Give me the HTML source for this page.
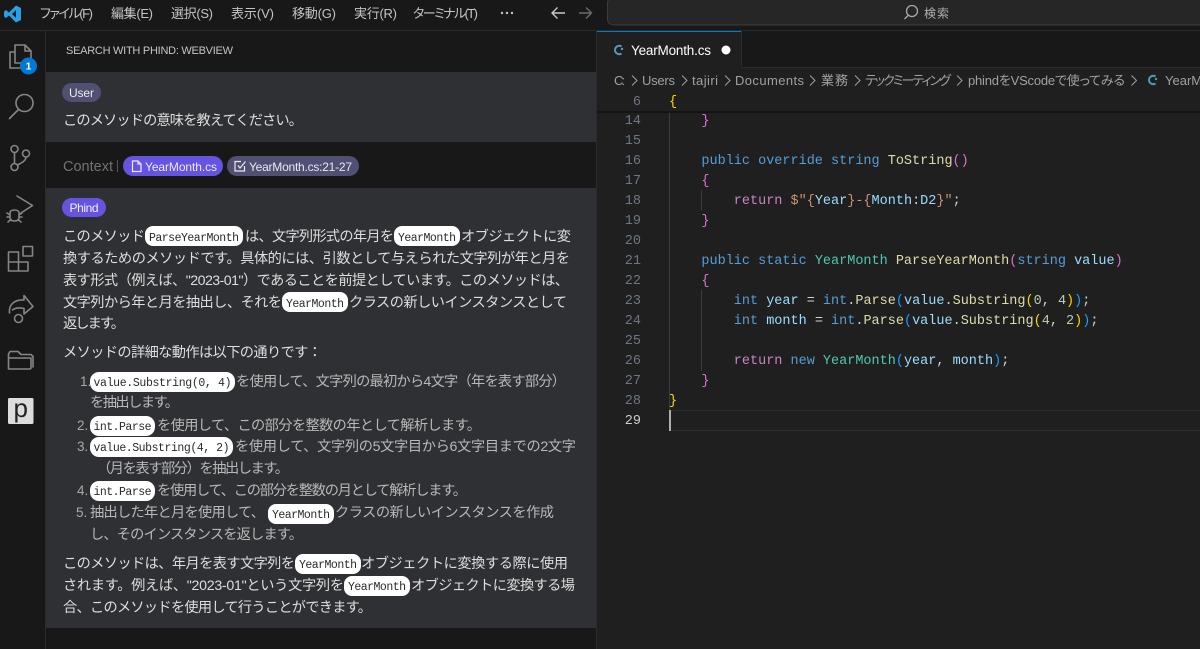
<!DOCTYPE html>
<html lang="ja"><head><meta charset="utf-8"><title>Phind</title>
<style>
html,body{margin:0;padding:0;background:#181818;width:1200px;height:649px;overflow:hidden}
svg{display:block;position:absolute;left:0;top:0}
text{font-family:"Liberation Sans","Noto Sans CJK JP",sans-serif;white-space:pre}
.m{font-size:13px;fill:#c4c4c4;font-feature-settings:"palt" 1}
.b{font-size:14.2px;fill:#dedede}
.l{font-size:14.2px;fill:#b8b8b8}
.n{font-size:13.5px;fill:#a8a8a8}
.cc{font-family:"Liberation Mono",monospace;font-size:11.5px;fill:#2a2a2a}
.c{font-family:"Liberation Mono",monospace;font-size:13.5px;fill:#9cdcfe}
.ln{font-family:"Liberation Mono",monospace;font-size:13.5px;fill:#6e7681;text-anchor:end}
.bc{font-size:13px;fill:#a0a0a0;font-feature-settings:"palt" 1}
.k{fill:#569cd6}.r{fill:#c586c0}.t{fill:#4ec9b0}.f{fill:#dcdcaa}.s{fill:#ce9178}.w{fill:#cccccc}.y{fill:#ffd700}.p{fill:#da70d6}.u{fill:#179fff}.d{fill:#b5cea8}.q{fill:#d4d4d4}
.ic{fill:none;stroke:#858585;stroke-width:1.6;stroke-linejoin:round;stroke-linecap:round}
.chip{fill:#fff}
</style></head><body>
<svg width="1200" height="649" viewBox="0 0 1200 649" xmlns="http://www.w3.org/2000/svg">
<rect width="1200" height="649" fill="#181818"/>
<!-- title bar -->
<rect x="0" y="30" width="1200" height="1" fill="#2b2b2b"/>
<path d="M16 5.5 L21 8 V20 L16 22.5 L9 15.5 L6 18 L4 16.5 V11.5 L6 10 L9 12.5 Z M16 10 L12 14 L16 18 Z" fill="#2b9fe6" fill-rule="evenodd"/>
<text class="m" x="40" y="18" textLength="53">ファイル(F)</text>
<text class="m" x="111" y="18" textLength="42">編集(E)</text>
<text class="m" x="171" y="18" textLength="42">選択(S)</text>
<text class="m" x="231" y="18" textLength="43">表示(V)</text>
<text class="m" x="292" y="18" textLength="44">移動(G)</text>
<text class="m" x="354" y="18" textLength="43">実行(R)</text>
<text class="m" x="413" y="18" textLength="65">ターミナル(T)</text>
<circle cx="502" cy="13" r="1.2" fill="#c4c4c4"/><circle cx="507" cy="13" r="1.2" fill="#c4c4c4"/><circle cx="512" cy="13" r="1.2" fill="#c4c4c4"/>
<path d="M565 13 H552 M557.500 7.500 L552 13 L557.500 18.500" fill="none" stroke="#c8c8c8" stroke-width="1.4"/>
<path d="M579 13 H591 M586 7.500 L591.500 13 L586 18.500" fill="none" stroke="#6a6a6a" stroke-width="1.4"/>
<rect x="607.500" y="-3" width="620" height="28" rx="6" fill="#262626" stroke="#3c3c3c"/>
<circle cx="912" cy="11" r="5.500" fill="none" stroke="#a8a8a8" stroke-width="1.300"/><path d="M908 15.500 L904.500 19" stroke="#a8a8a8" stroke-width="1.300"/>
<text x="924" y="17.500" font-size="12" fill="#b0b0b0" textLength="25">検索</text>

<!-- activity bar -->
<rect x="45" y="31" width="1" height="618" fill="#2b2b2b"/>
<path class="ic" d="M15 52 H10 V68 H23 V63 M15 45 H25 L31 51 V63 H15 Z M25 45 V51 H31"/>
<circle cx="28.500" cy="66" r="8.500" fill="#0078d4"/>
<text x="28.500" y="69.500" font-size="10" font-weight="bold" fill="#fff" text-anchor="middle">1</text>
<circle class="ic" cx="24.500" cy="103" r="8.500"/><path class="ic" d="M18.500 109.500 L9.500 118.500"/>
<circle class="ic" cx="14.500" cy="149" r="3.500"/><circle class="ic" cx="14.500" cy="167" r="3.500"/><circle class="ic" cx="26" cy="153.500" r="3.500"/>
<path class="ic" d="M14.500 152.500 V163.500 M26 157 C26 161 21 163 17.500 165"/>
<path class="ic" d="M17 196 L32.500 205.500 L21 213"/>
<path class="ic" d="M10 213 C10 209 19 209 19 213 V218 C19 222 10 222 10 218 Z M7 213 L10 215 M22 213 L19 215 M7 217 H10 M22 217 H19 M8 222 L11 219.500 M21 222 L18 219.500"/>
<path class="ic" d="M8.500 252 H18.500 V262 H28 V271 H8.500 Z M8.500 262 H18.500 V271"/>
<rect class="ic" x="23" y="246.500" width="9.500" height="9.500"/>
<path class="ic" d="M9.500 313 C8.500 304 15 299.500 24 300 V295.500 L33 306.500 L24 314 V308.500 C19 307.500 15 308 12.500 310"/>
<circle class="ic" cx="18.500" cy="318.500" r="4"/>
<path class="ic" d="M8.500 369 V354 L10 351.500 H18 L21 354.500 H31 L33 356.500 V367 M8.500 369 H29.500 Q31 369 31 367.500 V358 H8.500"/>
<rect x="8" y="398" width="25.500" height="26" rx="1.500" fill="#dcdcdc"/>
<text x="20.700" y="417" font-size="26" fill="#222" text-anchor="middle">p</text>

<!-- sidebar -->
<text x="66" y="54" font-size="11" fill="#c4c4c4" textLength="167">SEARCH WITH PHIND: WEBVIEW</text>
<rect x="46" y="72" width="550" height="70" fill="#2f3033"/>
<rect x="46" y="188" width="550" height="440" fill="#2f3033"/>
<rect x="596" y="31" width="1" height="618" fill="#2b2b2b"/>
<rect x="62" y="83" width="39" height="19" rx="9.500" fill="#514f72"/>
<text x="69" y="97" font-size="12" fill="#ececec" textLength="25">User</text>
<text class="b" x="63" y="125" textLength="240">このメソッドの意味を教えてください。</text>
<text x="63" y="171" font-size="14.500" fill="#727272" textLength="50">Context</text>
<rect x="117" y="160" width="1" height="12" fill="#555"/>
<rect x="123" y="156" width="100" height="20" rx="10" fill="#6653e0"/>
<path d="M132.500 161 H138 L141 164 V171.500 H132.500 Z M138 161 V164 H141" fill="none" stroke="#ebe8ff" stroke-width="1.200"/>
<text x="145" y="171" font-size="12" fill="#ece9ff" textLength="72">YearMonth.cs</text>
<rect x="227" y="156" width="132" height="20" rx="10" fill="#514f72"/>
<path d="M241 161.500 H235 V171 H244.500 V166 M238 165.500 L240 168 L245.500 161.500" fill="none" stroke="#e8e8f0" stroke-width="1.200"/>
<text x="249" y="171" font-size="12" fill="#e8e8f0" textLength="103">YearMonth.cs:21-27</text>
<rect x="62" y="198" width="44" height="19" rx="9.500" fill="#6653e0"/>
<text x="69.500" y="212" font-size="12" fill="#f0eeff" textLength="29">Phind</text>

<!-- answer body -->
<g>
<text class="b" x="63" y="241" textLength="82">このメソッド</text>
<rect class="chip" x="145" y="226" width="98" height="20" rx="8"/><text class="cc" x="149" y="241" textLength="90">ParseYearMonth</text>
<text class="b" x="245" y="241" textLength="149">は、文字列形式の年月を</text>
<rect class="chip" x="394" y="226" width="66" height="20" rx="8"/><text class="cc" x="398" y="241" textLength="58">YearMonth</text>
<text class="b" x="461" y="241" textLength="110">オブジェクトに変</text>

<text class="b" x="63" y="263" textLength="507">換するためのメソッドです。具体的には、引数として与えられた文字列が年と月を</text>
<text class="b" x="63" y="285" textLength="506">表す形式（例えば、"2023-01"）であることを前提としています。このメソッドは、</text>
<text class="b" x="63" y="307" textLength="219">文字列から年と月を抽出し、それを</text>
<rect class="chip" x="282" y="292" width="66" height="20" rx="8"/><text class="cc" x="286" y="307" textLength="58">YearMonth</text>
<text class="b" x="349" y="307" textLength="218">クラスの新しいインスタンスとして</text>
<text class="b" x="63" y="328" textLength="62">返します。</text>
<text class="b" x="63" y="357" textLength="259">メソッドの詳細な動作は以下の通りです：</text>

<text class="n" x="80" y="386">1.</text>
<rect class="chip" x="90" y="372" width="145" height="20" rx="9"/><text class="cc" x="93.500" y="386" textLength="138">value.Substring(0, 4)</text>
<text class="l" x="236" y="386" textLength="330">を使用して、文字列の最初から4文字（年を表す部分）</text>
<text class="l" x="90" y="407" textLength="89">を抽出します。</text>

<text class="n" x="77" y="430">2.</text>
<rect class="chip" x="90" y="416" width="65" height="20" rx="9"/><text class="cc" x="93.500" y="430" textLength="58">int.Parse</text>
<text class="l" x="157" y="430" textLength="324">を使用して、この部分を整数の年として解析します。</text>

<text class="n" x="77" y="451">3.</text>
<rect class="chip" x="90" y="437" width="143" height="20" rx="9"/><text class="cc" x="93.500" y="451" textLength="136">value.Substring(4, 2)</text>
<text class="l" x="235" y="451" textLength="341">を使用して、文字列の5文字目から6文字目までの2文字</text>
<text class="l" x="97" y="473" textLength="192">（月を表す部分）を抽出します。</text>

<text class="n" x="77" y="495">4.</text>
<rect class="chip" x="90" y="481" width="65" height="20" rx="9"/><text class="cc" x="93.500" y="495" textLength="58">int.Parse</text>
<text class="l" x="157" y="495" textLength="310">を使用して、この部分を整数の月として解析します。</text>

<text class="n" x="76" y="517">5.</text>
<text class="l" x="90" y="517" textLength="175">抽出した年と月を使用して、</text>
<rect class="chip" x="268" y="504" width="66" height="20" rx="8"/><text class="cc" x="272" y="518" textLength="58">YearMonth</text>
<text class="l" x="335" y="517" textLength="219">クラスの新しいインスタンスを作成</text>
<text class="l" x="90" y="539" textLength="213">し、そのインスタンスを返します。</text>

<text class="b" x="63" y="568" textLength="232">このメソッドは、年月を表す文字列を</text>
<rect class="chip" x="295" y="554" width="66" height="20" rx="8"/><text class="cc" x="299" y="568" textLength="58">YearMonth</text>
<text class="b" x="361" y="568" textLength="207">オブジェクトに変換する際に使用</text>

<text class="b" x="63" y="590" textLength="281">されます。例えば、"2023-01"という文字列を</text>
<rect class="chip" x="344" y="576" width="66" height="20" rx="8"/><text class="cc" x="348" y="590" textLength="58">YearMonth</text>
<text class="b" x="411" y="590" textLength="164">オブジェクトに変換する場</text>
<text class="b" x="63" y="612" textLength="309">合、このメソッドを使用して行うことができます。</text>
</g>

<!-- editor -->
<rect x="597" y="31" width="603" height="618" fill="#1f1f1f"/>
<rect x="597" y="31" width="603" height="37" fill="#181818"/>
<rect x="597" y="31" width="144" height="37" fill="#1f1f1f"/>
<rect x="597" y="31" width="144" height="1" fill="#0078d4"/>
<rect x="741" y="31" width="1" height="37" fill="#2b2b2b"/>
<rect x="742" y="67" width="458" height="1" fill="#2b2b2b"/>
<path d="M621.500 46.500 A4.200 4.200 0 1 0 621.500 53.500" fill="none" stroke="#519aba" stroke-width="2"/><circle cx="622" cy="49" r="1.200" fill="#519aba"/>
<text x="631" y="55" font-size="13.500" fill="#ffffff" textLength="80">YearMonth.cs</text>
<circle cx="726" cy="50" r="4.500" fill="#ffffff"/>

<text class="bc" x="614" y="85" textLength="11">C:</text>
<path d="M632 75.500 L637 80.500 L632 85.500 M682 75.500 L687 80.500 L682 85.500 M725 75.500 L730 80.500 L725 85.500 M810 75.500 L815 80.500 L810 85.500 M855 75.500 L860 80.500 L855 85.500 M957 75.500 L962 80.500 L957 85.500 M1131.500 75.500 L1136.500 80.500 L1131.500 85.500" fill="none" stroke="#a0a0a0" stroke-width="1"/>
<text class="bc" x="642" y="85" textLength="33">Users</text>
<text class="bc" x="692" y="85" textLength="26">tajiri</text>
<text class="bc" x="735" y="85" textLength="69">Documents</text>
<text class="bc" x="821" y="85" textLength="27">業務</text>
<text class="bc" x="865" y="85" textLength="86">テックミーティング</text>
<text class="bc" x="968" y="85" textLength="157">phindをVScodeで使ってみる</text>
<path d="M1155.500 76.500 A4.200 4.200 0 1 0 1155.500 83.500" fill="none" stroke="#519aba" stroke-width="2"/><circle cx="1156" cy="79" r="1.200" fill="#519aba"/>
<text class="bc" x="1165" y="85">YearMonth.cs</text>

<rect x="669" y="111" width="1" height="300" fill="#3c3c3c"/>
<rect x="701" y="190" width="1" height="20" fill="#3c3c3c"/>
<rect x="701" y="290" width="1" height="81" fill="#3c3c3c"/>
<rect x="670" y="410" width="530" height="1" fill="#2c2c2c"/><rect x="670" y="430" width="530" height="1" fill="#2c2c2c"/>
<rect x="669" y="410" width="2" height="21" fill="#aeafad"/>

<g transform="translate(0,-1)">
<text class="ln" x="641" y="125">14</text><text class="ln" x="641" y="145">15</text><text class="ln" x="641" y="165">16</text><text class="ln" x="641" y="185">17</text><text class="ln" x="641" y="205">18</text><text class="ln" x="641" y="225">19</text><text class="ln" x="641" y="245">20</text><text class="ln" x="641" y="265">21</text><text class="ln" x="641" y="285">22</text><text class="ln" x="641" y="305">23</text><text class="ln" x="641" y="325">24</text><text class="ln" x="641" y="345">25</text><text class="ln" x="641" y="365">26</text><text class="ln" x="641" y="385">27</text><text class="ln" x="641" y="405">28</text><text class="ln" x="641" y="425" style="fill:#cccccc">29</text>

<text class="c" x="701.400" y="125"><tspan class="p">}</tspan></text>
<text class="c" x="701.400" y="165"><tspan class="k">public override string </tspan><tspan class="f">ToString</tspan><tspan class="p">(</tspan><tspan class="p">)</tspan></text>
<text class="c" x="701.400" y="185"><tspan class="p">{</tspan></text>
<text class="c" x="733.800" y="205"><tspan class="r">return </tspan><tspan class="s">$"{</tspan><tspan>Year</tspan><tspan class="s">}-{</tspan><tspan>Month</tspan><tspan class="q">:</tspan><tspan>D2</tspan><tspan class="s">}"</tspan><tspan class="q">;</tspan></text>
<text class="c" x="701.400" y="225"><tspan class="p">}</tspan></text>
<text class="c" x="701.400" y="265"><tspan class="k">public static </tspan><tspan class="t">YearMonth </tspan><tspan class="f">ParseYearMonth</tspan><tspan class="p">(</tspan><tspan class="k">string </tspan><tspan>value</tspan><tspan class="p">)</tspan></text>
<text class="c" x="701.400" y="285"><tspan class="p">{</tspan></text>
<text class="c" x="733.800" y="305"><tspan class="k">int </tspan><tspan>year </tspan><tspan class="q">= </tspan><tspan class="k">int</tspan><tspan class="q">.</tspan><tspan class="f">Parse</tspan><tspan class="u">(</tspan><tspan>value</tspan><tspan class="q">.</tspan><tspan class="f">Substring</tspan><tspan class="y">(</tspan><tspan class="d">0</tspan><tspan class="q">, </tspan><tspan class="d">4</tspan><tspan class="y">)</tspan><tspan class="u">)</tspan><tspan class="q">;</tspan></text>
<text class="c" x="733.800" y="325"><tspan class="k">int </tspan><tspan>month </tspan><tspan class="q">= </tspan><tspan class="k">int</tspan><tspan class="q">.</tspan><tspan class="f">Parse</tspan><tspan class="u">(</tspan><tspan>value</tspan><tspan class="q">.</tspan><tspan class="f">Substring</tspan><tspan class="y">(</tspan><tspan class="d">4</tspan><tspan class="q">, </tspan><tspan class="d">2</tspan><tspan class="y">)</tspan><tspan class="u">)</tspan><tspan class="q">;</tspan></text>
<text class="c" x="733.800" y="365"><tspan class="r">return </tspan><tspan class="k">new </tspan><tspan class="t">YearMonth</tspan><tspan class="u">(</tspan><tspan>year</tspan><tspan class="q">, </tspan><tspan>month</tspan><tspan class="u">)</tspan><tspan class="q">;</tspan></text>
<text class="c" x="701.400" y="385"><tspan class="p">}</tspan></text>
<text class="c" x="669" y="405"><tspan class="y">}</tspan></text>
</g>

<!-- sticky scroll -->
<rect x="597" y="90" width="603" height="21" fill="#1f1f1f"/>
<rect x="597" y="111" width="603" height="2" fill="#111111" opacity=".75"/>
<text class="ln" x="641" y="105">6</text>
<text class="c" x="669" y="105"><tspan class="y">{</tspan></text>
</svg>
</body></html>
